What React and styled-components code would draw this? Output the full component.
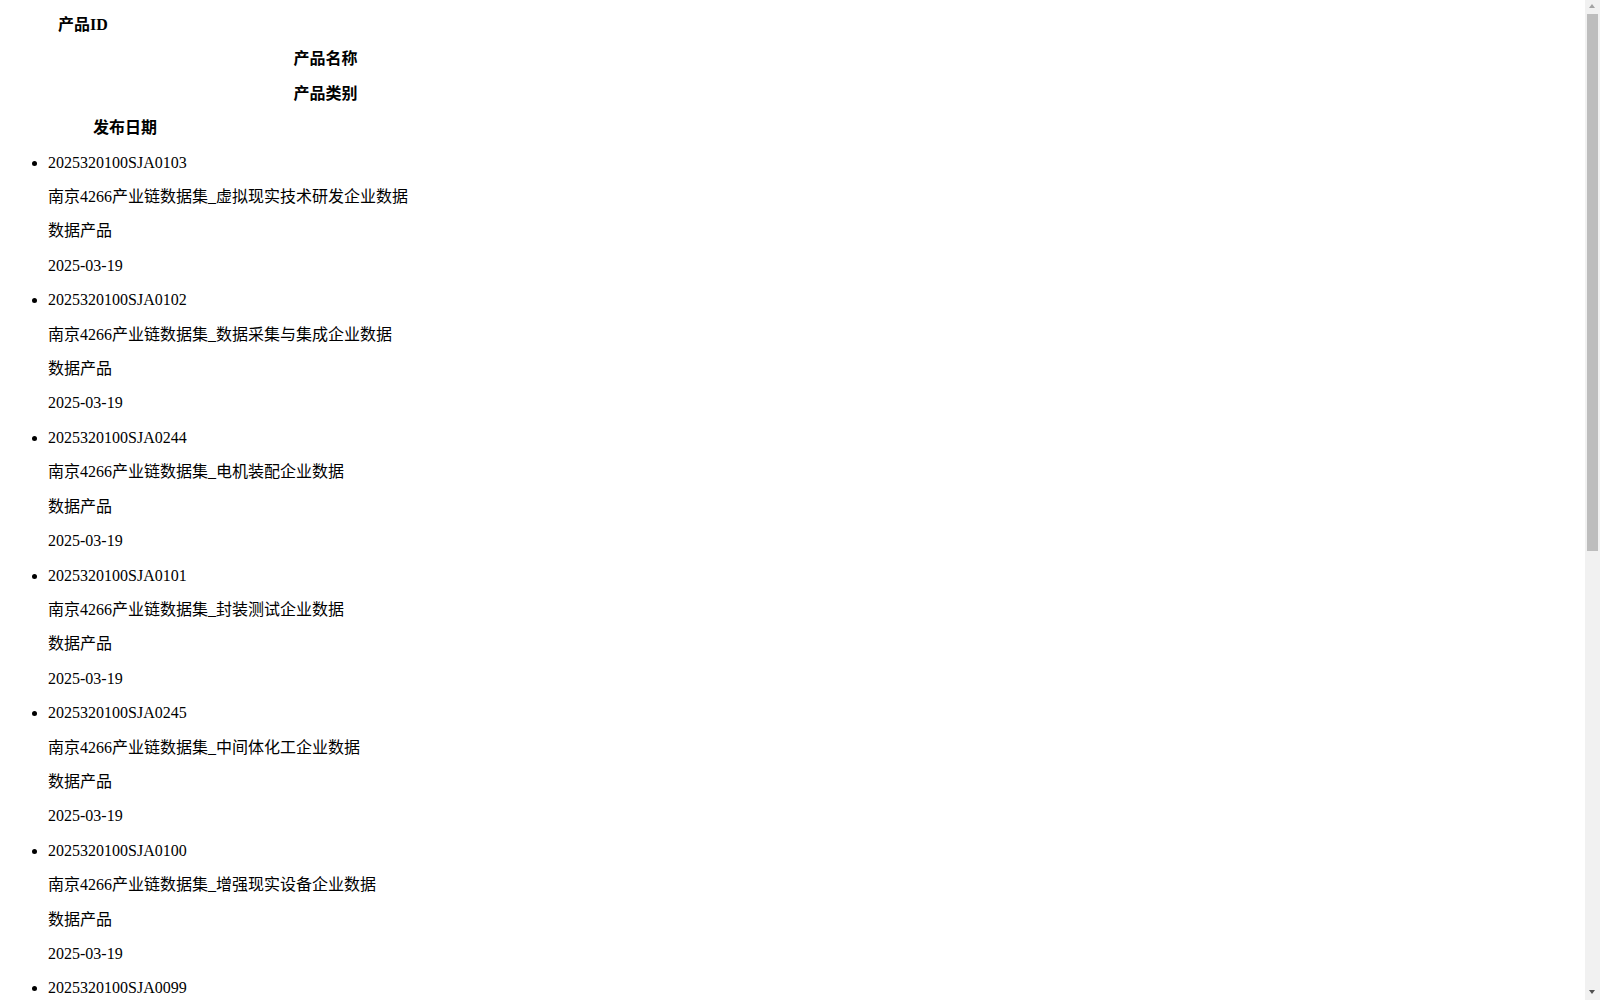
import React from 'react';
import styled, { createGlobalStyle } from 'styled-components';

const GlobalStyle = createGlobalStyle`
  body {
    margin: 0;
    padding: 0 8px;
    background: #fff;
    color: #000;
    font-family: "Liberation Serif", "Noto Sans CJK SC", serif;
    font-size: 16px;
    line-height: 18.4px;
  }
`;

const Header = styled.div`
  display: block;
`;

const HeadCell = styled.p`
  margin: 16px 0;
  width: ${props => props.w};
  text-align: center;
  font-weight: bold;
`;

const List = styled.ul`
  margin: 16px 0;
  padding-left: 40px;
  list-style: disc;
`;

const Item = styled.li`
  display: list-item;
`;

const Cell = styled.p`
  margin: 16px 0;
`;

// the window's classic scrollbar, drawn over the right edge
const ScrollTrack = styled.div`
  position: fixed;
  top: 0;
  right: 0;
  width: 15px;
  height: 100vh;
  background: #f1f1f1;
`;

const ScrollThumb = styled.div`
  position: absolute;
  left: 2px;
  right: 2px;
  top: 14px;
  height: 537px;
  background: #bdbdbd;
`;

const Arrow = styled.div`
  position: absolute;
  left: 4px;
  width: 0;
  height: 0;
  border-left: 3.5px solid transparent;
  border-right: 3.5px solid transparent;
  ${props => props.down
    ? `bottom: 6px; border-top: 4px solid #505050;`
    : `top: 4px; border-bottom: 4px solid #a3a3a3;`}
`;

const products = [
  ['2025320100SJA0103', '南京4266产业链数据集_虚拟现实技术研发企业数据'],
  ['2025320100SJA0102', '南京4266产业链数据集_数据采集与集成企业数据'],
  ['2025320100SJA0244', '南京4266产业链数据集_电机装配企业数据'],
  ['2025320100SJA0101', '南京4266产业链数据集_封装测试企业数据'],
  ['2025320100SJA0245', '南京4266产业链数据集_中间体化工企业数据'],
  ['2025320100SJA0100', '南京4266产业链数据集_增强现实设备企业数据'],
  ['2025320100SJA0099', '南京4266产业链数据集_智能传感器企业数据'],
  ['2025320100SJA0246', '南京4266产业链数据集_生物医药研发企业数据'],
  ['2025320100SJA0098', '南京4266产业链数据集_集成电路设计企业数据'],
  ['2025320100SJA0247', '南京4266产业链数据集_新能源汽车零部件企业数据'],
  ['2025320100SJA0097', '南京4266产业链数据集_工业软件企业数据'],
  ['2025320100SJA0248', '南京4266产业链数据集_动力电池企业数据'],
];

export default function App() {
  return (
    <>
      <GlobalStyle />
      <Header>
        <HeadCell w="150px">产品ID</HeadCell>
        <HeadCell w="635px">产品名称</HeadCell>
        <HeadCell w="635px">产品类别</HeadCell>
        <HeadCell w="234px">发布日期</HeadCell>
      </Header>
      <List>
        {products.map(([id, name]) => (
          <Item key={id}>
            <Cell>{id}</Cell>
            <Cell>{name}</Cell>
            <Cell>数据产品</Cell>
            <Cell>2025-03-19</Cell>
          </Item>
        ))}
      </List>
      <ScrollTrack>
        <Arrow />
        <ScrollThumb />
        <Arrow down />
      </ScrollTrack>
    </>
  );
}
